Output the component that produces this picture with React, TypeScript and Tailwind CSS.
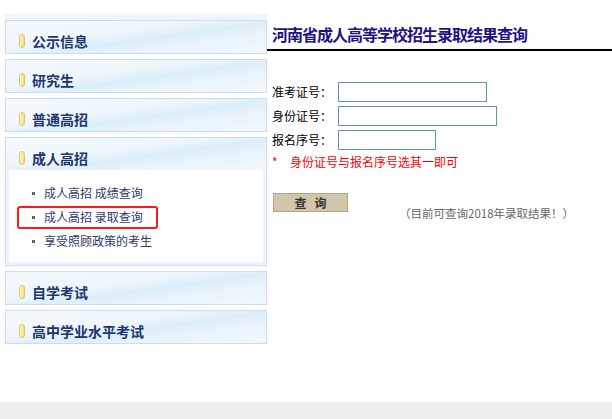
const menus = ['公示信息', '研究生', '普通高招'];
const bottomMenus = ['自学考试', '高中学业水平考试'];
const subLinks = ['成人高招 成绩查询', '成人高招 录取查询', '享受照顾政策的考生'];

function Pill() {
  return (
    <span className="inline-block w-[6px] h-[14px] rounded-[3px] border border-[#e6c462] bg-[linear-gradient(90deg,#fff6c8,#f7dc7a)]" />
  );
}

function MenuHeader({ title }: { title: string }) {
  return (
    <div className="h-[32px] pt-[10px] pl-[13px] flex items-start gap-[7px] bg-[linear-gradient(172deg,#f5f9fd_0%,#eef6fc_40%,#ddeef9_55%,#e8f3fb_70%,#f3f8fd_100%)]">
      <div className="h-[20px] flex items-center">
        <Pill />
      </div>
      <span className="text-[14px] leading-[20px] font-bold text-[#1d3670]">{title}</span>
    </div>
  );
}

function MenuBox({ title }: { title: string }) {
  return (
    <div className="border border-[#c8dcf6]">
      <MenuHeader title={title} />
    </div>
  );
}

export default function App() {
  return (
    <div className="w-[612px] h-[419px] bg-white flex flex-col font-['Noto_Sans_CJK_SC',sans-serif]">
      <div className="h-[402px] flex">
        {/* sidebar */}
        <div className="ml-[5px] w-[262px] mt-[14px] flex flex-col">
          <div className="h-[6px] bg-[#eef5fd]" />
          <div className="flex flex-col gap-[5px]">
            {menus.map(m => (
              <MenuBox key={m} title={m} />
            ))}
            <div className="border border-[#c8dcf6] bg-[#eef5fc]">
              <MenuHeader title="成人高招" />
              <div className="mx-[3px] mb-[3px] h-[92px] bg-white pt-[11px]">
                {subLinks.map((s, i) => (
                  <div key={s} className="relative h-[24px] flex items-center pl-[23px] gap-[9px]">
                    <span className="w-[3px] h-[3px] bg-[#666]" />
                    <span className="text-[12px] text-[#2c3b6a]">{s}</span>
                    {i === 1 && (
                      <span className="absolute left-[8px] top-[1px] w-[141px] h-[23px] border-2 border-[#ff1a1a] rounded-[3px]" />
                    )}
                  </div>
                ))}
              </div>
            </div>
            {bottomMenus.map(m => (
              <MenuBox key={m} title={m} />
            ))}
          </div>
        </div>

        {/* main */}
        <div className="flex-1 flex flex-col">
          <div className="mt-[23px] pl-[5px] text-[16px] leading-[22px] font-bold tracking-[-1px] text-[#1e1286]">
            河南省成人高等学校招生录取结果查询
          </div>
          <div className="mt-[4px] h-[2px] bg-black" />

          <div className="mt-[31px] pl-[5px] flex flex-col gap-[4px] text-[12px] text-black">
            <div className="flex items-center">
              <span className="w-[66px]">准考证号：</span>
              <input className="w-[149px] h-[20px] border border-[#5f98ad] bg-white outline-none" />
            </div>
            <div className="flex items-center">
              <span className="w-[66px]">身份证号：</span>
              <input className="w-[159px] h-[20px] border border-[#5f98ad] bg-white outline-none" />
            </div>
            <div className="flex items-center">
              <span className="w-[66px]">报名序号：</span>
              <input className="w-[98px] h-[20px] border border-[#5f98ad] bg-white outline-none" />
            </div>
          </div>

          <div className="mt-[4px] pl-[5px] text-[12px] leading-[16px] text-[#ff0000] flex">
            <span className="w-[18px]">*</span>
            <span>身份证号与报名序号选其一即可</span>
          </div>

          <div className="mt-[23px] pl-[6px] flex items-start">
            <button className="w-[75px] h-[19px] bg-[#d3c5aa] border border-[#b3a587] text-[12px] leading-[17px] font-bold text-[#333] tracking-[8px] pl-[8px]">
              查询
            </button>
            <span className="ml-[51px] mt-[13px] text-[11.5px] leading-[14px] text-[#666]">
              （目前可查询2018年录取结果！）
            </span>
          </div>
        </div>
      </div>
      <div className="flex-1 bg-[#efefef]" />
    </div>
  );
}
